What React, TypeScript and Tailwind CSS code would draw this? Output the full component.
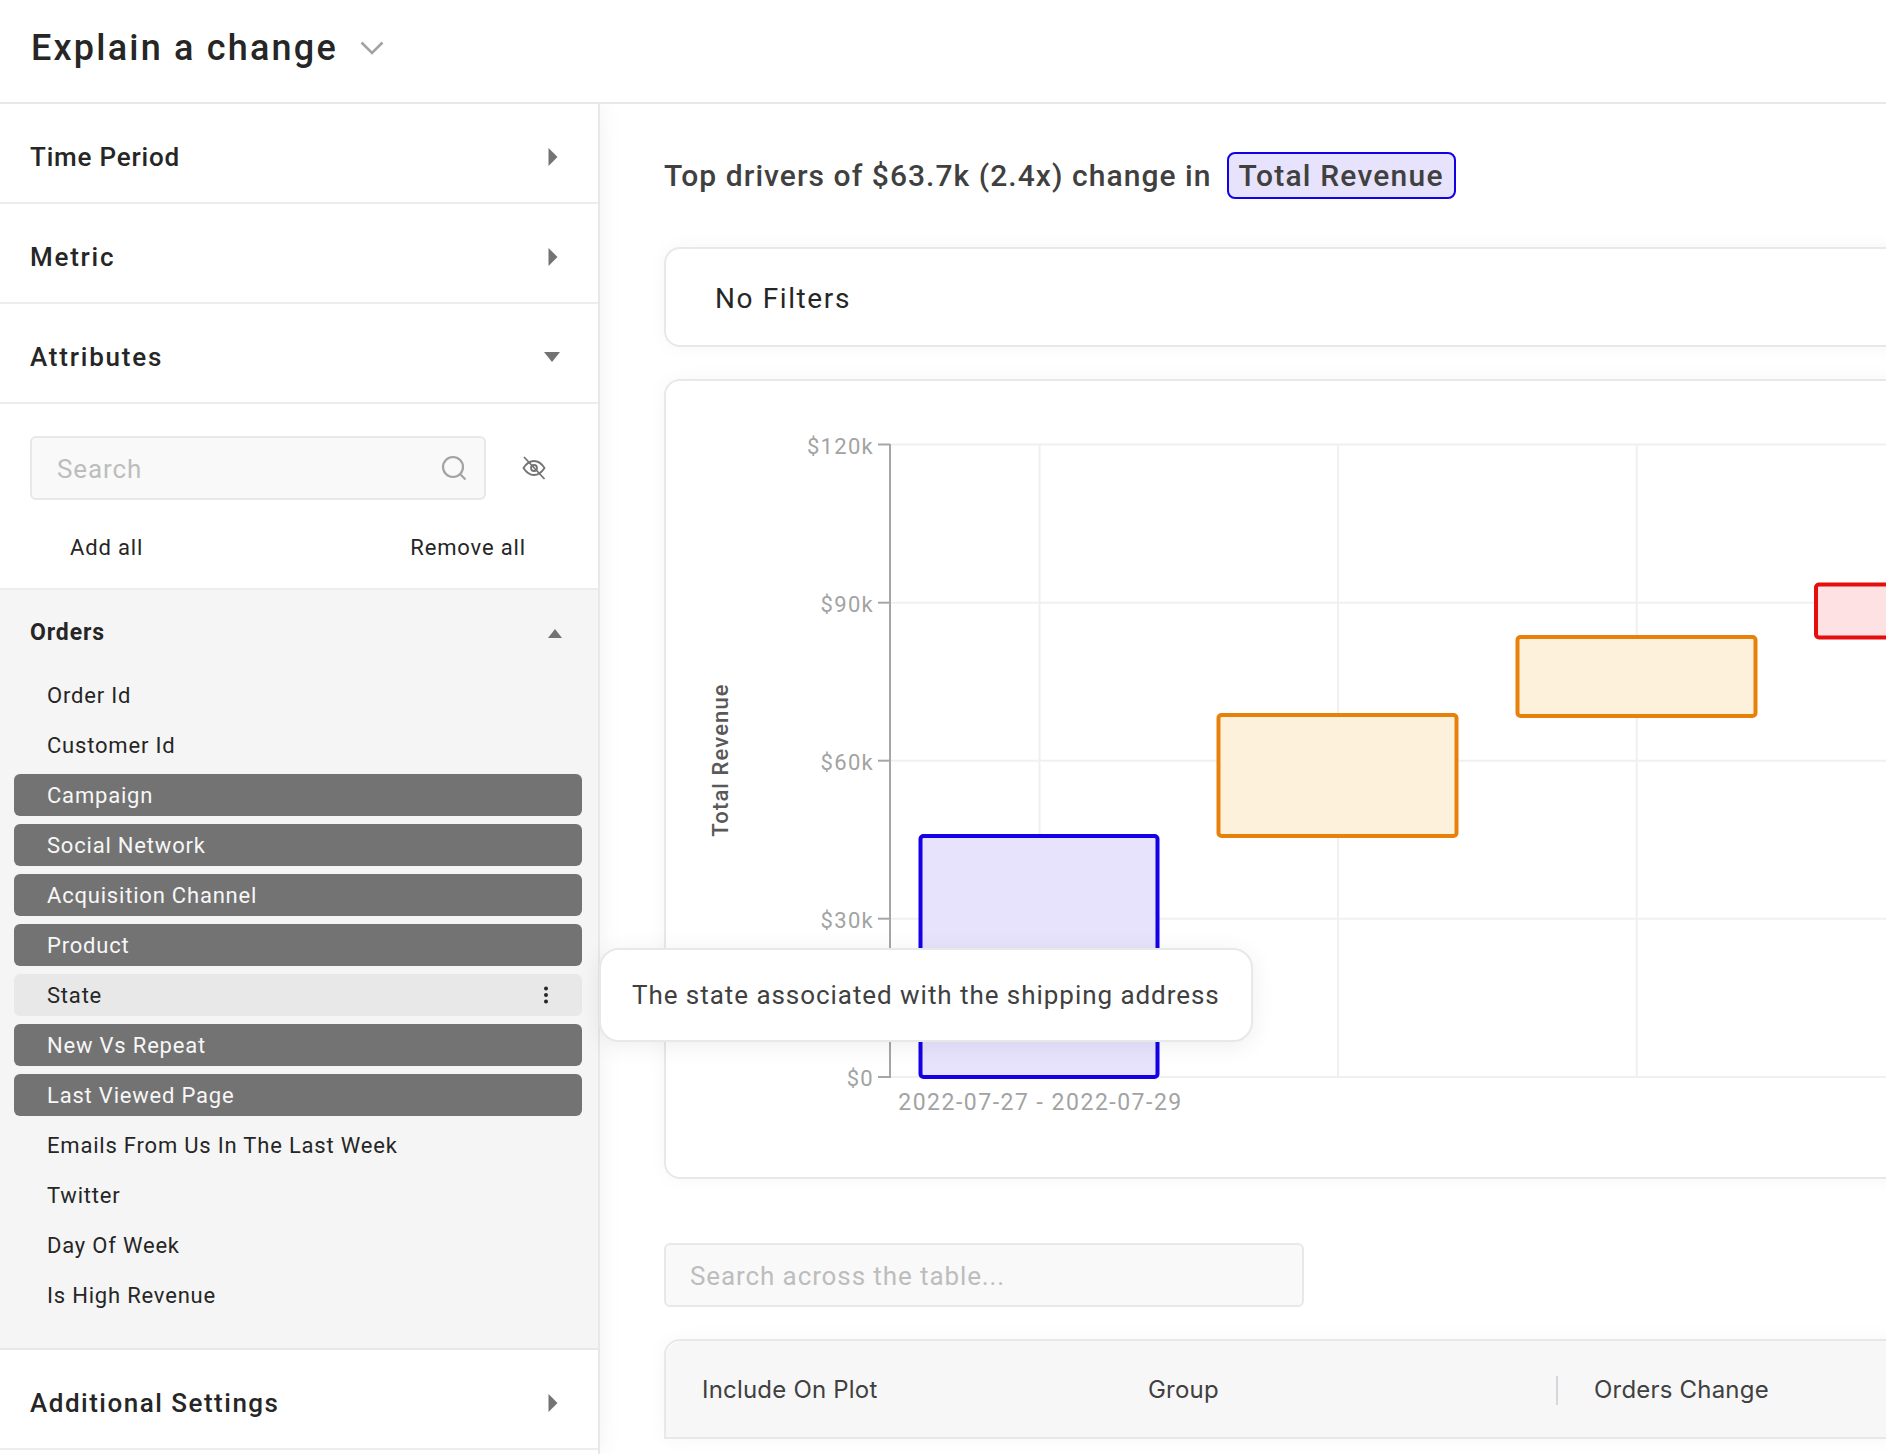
import React from "react";

const items: [string, number][] = [
  ["Order Id", 0],
  ["Customer Id", 0],
  ["Campaign", 1],
  ["Social Network", 1],
  ["Acquisition Channel", 1],
  ["Product", 1],
  ["State", 2],
  ["New Vs Repeat", 1],
  ["Last Viewed Page", 1],
  ["Emails From Us In The Last Week", 0],
  ["Twitter", 0],
  ["Day Of Week", 0],
  ["Is High Revenue", 0],
];

function CaretRight() {
  return (
    <svg width="10" height="18" viewBox="0 0 10 18" className="fill-[#737373]">
      <path d="M0.5 0 L9.5 9 L0.5 18 Z" />
    </svg>
  );
}
function CaretDown() {
  return (
    <svg width="16" height="10" viewBox="0 0 16 10" className="fill-[#737373]">
      <path d="M0 0 H16 L8 10 Z" />
    </svg>
  );
}
function Section({ label, open, track }: { label: string; open?: boolean; track: string }) {
  return (
    <div className="flex h-[100px] items-center justify-between border-b-2 border-[#ededed] pl-[30px] pr-[40px] pt-[8px]">
      <span className={`text-[26px] font-medium text-[#262626] ${track}`}>{label}</span>
      {open ? <div className="-mr-[2px]"><CaretDown /></div> : <CaretRight />}
    </div>
  );
}

function Row({ label, kind }: { label: string; kind: number }) {
  const cls =
    kind === 1
      ? "bg-[#737373] text-[#f7f7f7]"
      : kind === 2
        ? "bg-[#e8e8e8] text-[#262626]"
        : "text-[#262626]";
  return (
    <div className={`flex h-[42px] items-center justify-between rounded-[6px] pl-[33px] pr-[33px] text-[22px] tracking-[0.8px] ${cls}`}>
      <span>{label}</span>
      {kind === 2 && (
        <svg width="6" height="20" viewBox="0 0 6 20" className="fill-[#262626]">
          <circle cx="3" cy="3.5" r="2" />
          <circle cx="3" cy="10" r="2" />
          <circle cx="3" cy="16.5" r="2" />
        </svg>
      )}
    </div>
  );
}

function Chart() {
  const grid = "#f0f0f0";
  const ys = [444.5, 602.7, 760.7, 918.7, 1077];
  const labels = ["$120k", "$90k", "$60k", "$30k", "$0"];
  const xs = [1039.5, 1338, 1636.7];
  const tick = "#a6a6a6";
  return (
    <svg width="1400" height="796" viewBox="666 381 1400 796" className="block" style={{ fontFamily: "Roboto, sans-serif" }}>
      {ys.map((y) => (
        <line key={y} x1="890" x2="2067" y1={y} y2={y} stroke={grid} strokeWidth="2" />
      ))}
      {xs.map((x) => (
        <line key={x} x1={x} x2={x} y1="444.5" y2="1077" stroke={grid} strokeWidth="2" />
      ))}
      <line x1="890" x2="890" y1="444" y2="1078" stroke={tick} strokeWidth="2" />
      {ys.map((y, i) => (
        <g key={y}>
          <line x1="878" x2="890" y1={y} y2={y} stroke={tick} strokeWidth="2" />
          <text x="874" y={y + 9} textAnchor="end" fontSize="22" letterSpacing="1.3" fill="#a3a3a3">
            {labels[i]}
          </text>
        </g>
      ))}
      <rect x="920.5" y="836" width="237" height="241" rx="3" fill="#e7e3fd" stroke="#1400e6" strokeWidth="4" />
      <rect x="1218.5" y="715" width="238" height="121" rx="3" fill="#fdf1dc" stroke="#e8810a" strokeWidth="4" />
      <rect x="1517.5" y="637" width="238" height="79" rx="3" fill="#fdf1dc" stroke="#e8810a" strokeWidth="4" />
      <rect x="1816" y="584.5" width="238" height="53" rx="3" fill="#fde1e3" stroke="#e60d0d" strokeWidth="4" />
      <text x="1040.5" y="1110" textAnchor="middle" fontSize="23" letterSpacing="1.5" fill="#a3a3a3">
        2022-07-27 - 2022-07-29
      </text>
      <text
        transform="translate(728 760) rotate(-90)"
        textAnchor="middle"
        fontSize="22"
        fontWeight="500"
        letterSpacing="1.1"
        fill="#595959"
      >
        Total Revenue
      </text>
    </svg>
  );
}

export default function App() {
  return (
    <div className="relative flex h-[1454px] w-[1886px] flex-col overflow-hidden bg-white font-['Roboto',sans-serif]">
      <header className="relative z-20 flex h-[104px] flex-none items-center gap-[22px] border-b-2 border-[#e8e8e8] bg-white pb-[7px] pl-[31px]">
        <h1 className="text-[36px] font-medium tracking-[2.2px] text-[#262626]">Explain a change</h1>
        <svg width="24" height="14" viewBox="0 0 24 14" fill="none" stroke="#a3a3a3" strokeWidth="2.6">
          <path d="M1.5 1.5 L12 12 L22.5 1.5" />
        </svg>
      </header>
      <div className="flex min-h-0 flex-1">
        <aside className="relative z-10 w-[600px] flex-none border-r-2 border-[#e8e8e8] bg-white shadow-[0_0_24px_rgba(0,0,0,0.06)]">
          <Section label="Time Period" track="tracking-[0.8px]" />
          <Section label="Metric" track="tracking-[1.75px]" />
          <Section label="Attributes" open track="tracking-[1.8px]" />
          <div className="flex items-center pl-[30px] pt-[32px]">
            <div className="flex h-[64px] w-[456px] items-center justify-between rounded-[6px] border-2 border-[#e8e8e8] bg-[#f9f9f9] pl-[25px] pr-[17px] pt-[2px]">
              <span className="text-[26px] tracking-[0.9px] text-[#bdbdbd]">Search</span>
              <svg width="26" height="26" viewBox="0 0 26 26" fill="none" stroke="#a3a3a3" strokeWidth="2.2" className="-mt-[2px]">
                <circle cx="12" cy="12" r="10" />
                <path d="M19.5 19.5 L24.5 24.5" />
              </svg>
            </div>
            <svg className="ml-[36px]" width="24" height="24" viewBox="0 0 24 24" fill="none" stroke="#737373" strokeWidth="1.8">
              <path d="M1.5 12 C5 6.5 8.5 5 12 5 C15.5 5 19 6.5 22.5 12 C19 17.5 15.5 19 12 19 C8.5 19 5 17.5 1.5 12 Z" />
              <circle cx="12" cy="12" r="3" />
              <path d="M2 1 L22.5 23" />
            </svg>
          </div>
          <div className="flex h-[90px] items-center justify-between border-b-2 border-[#ededed] pl-[70px] pr-[72px] pt-[6px] text-[22px] tracking-[0.85px] text-[#262626]">
            <span>Add all</span>
            <span>Remove all</span>
          </div>
          <div className="flex h-[760px] flex-col border-b-2 border-[#e8e8e8] bg-[#f5f5f5] pl-[14px] pr-[16px]">
            <div className="flex h-[84px] flex-none items-center justify-between pl-[16px] pr-[20px] pt-[2px]">
              <span className="text-[23px] font-bold tracking-[0.9px] text-[#262626]">Orders</span>
              <svg width="14" height="9" viewBox="0 0 14 9" className="fill-[#737373]">
                <path d="M0 9 L7 0 L14 9 Z" />
              </svg>
            </div>
            <div className="flex flex-col gap-[8px]">
              {items.map(([l, k]) => (
                <Row key={l} label={l} kind={k} />
              ))}
            </div>
          </div>
          <Section label="Additional Settings" track="tracking-[1.5px]" />
        </aside>
        <main className="relative min-w-0 flex-1 pl-[64px] pt-[48px]">
          <div className="flex h-[47px] items-center">
            <span className="text-[30px] font-medium tracking-[1.05px] text-[#404040]">Top drivers of $63.7k (2.4x) change in</span>
            <span className="ml-[15px] flex h-[47px] items-center rounded-[8px] border-2 border-[#1400e6] bg-[#e7e3fd] px-[10px] text-[30px] font-medium tracking-[1.2px] text-[#404040]">
              Total Revenue
            </span>
          </div>
          <div className="mt-[48px] flex h-[100px] w-[1400px] items-center rounded-[16px] border-2 border-[#e8e8e8] bg-white pl-[49px] pt-[3px] text-[28px] tracking-[1.6px] text-[#262626] shadow-[0_0_20px_rgba(0,0,0,0.04)]">
            No Filters
          </div>
          <div className="mt-[32px] h-[800px] w-[1404px] rounded-[16px] border-2 border-[#e8e8e8] bg-white shadow-[0_0_20px_rgba(0,0,0,0.04)]">
            <Chart />
          </div>
          <div className="mt-[64px] flex h-[64px] w-[640px] items-center rounded-[6px] border-2 border-[#e8e8e8] bg-[#f9f9f9] pl-[24px] pt-[2px] text-[26px] tracking-[0.9px] text-[#bdbdbd]">
            Search across the table...
          </div>
          <div className="mt-[32px] w-[1404px] rounded-t-[16px] border-2 border-b-0 border-[#e8e8e8] bg-white shadow-[0_0_20px_rgba(0,0,0,0.04)]">
            <div className="flex h-[98px] items-center rounded-t-[16px] border-b-2 border-[#e8e8e8] bg-[#f7f7f7] pl-[36px] pt-[2px] font-['Inter',sans-serif] text-[24px] tracking-[0.2px] text-[#404040]">
              <span className="w-[446px]">Include On Plot</span>
              <span className="w-[408px]">Group</span>
              <span className="h-[29px] w-[2px] bg-[#d4d8dc]" />
              <span className="ml-[36px]">Orders Change</span>
            </div>
          </div>
        </main>
      </div>
      <div className="absolute left-[599px] top-[948px] z-30 flex h-[94px] w-[654px] items-center rounded-[20px] border-2 border-[#e8e8e8] bg-white pl-[31px] text-[26px] tracking-[0.95px] text-[#404040] shadow-[0_4px_24px_rgba(0,0,0,0.07)]">
        The state associated with the shipping address
      </div>
    </div>
  );
}
